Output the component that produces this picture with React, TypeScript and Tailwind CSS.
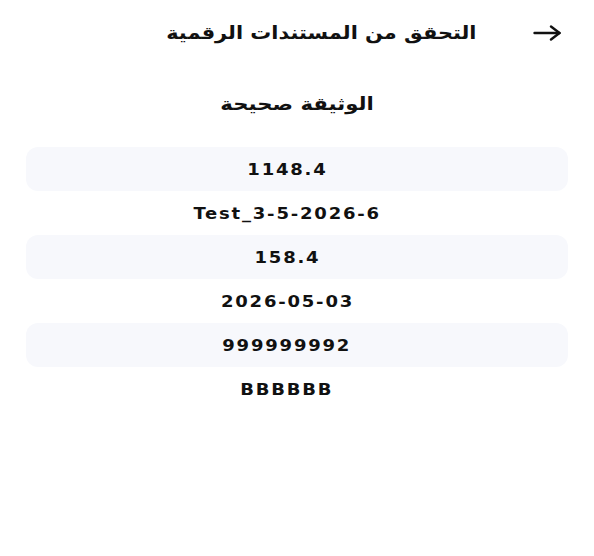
const rows = ["1148.4", "Test_3-5-2026-6", "158.4", "2026-05-03", "999999992", "BBBBBB"];

function BackArrow() {
  return (
    <svg width="28" height="16" viewBox="0 0 28 16" fill="none" stroke="#111" strokeWidth="2.4" strokeLinecap="round" strokeLinejoin="round">
      <path d="M1.5 8h25" />
      <path d="M18 1.5l8.5 6.5-8.5 6.5" />
    </svg>
  );
}

export default function App() {
  return (
    <div
      dir="rtl"
      className="min-h-[556px] w-[594px] bg-white text-[#111] [font-family:'DejaVu_Sans',sans-serif]"
    >
      <div className="flex h-[64px] items-center pr-[33px] pl-[32px] pt-[2px]">
        <span className="ml-[57px] flex">
          <BackArrow />
        </span>
        <h1 className="-mt-[2px] origin-right scale-x-[1.16] text-[18px] font-bold">التحقق من المستندات الرقمية</h1>
      </div>
      <div className="mt-[26px] flex justify-center">
        <span className="scale-x-[1.18] text-[18px] font-bold">الوثيقة صحيحة</span>
      </div>
      <div className="mt-[30px] flex flex-col px-[26px]">
        {rows.map((r, i) => (
          <div
            key={r}
            dir="ltr"
            className={
              "flex h-[44px] items-center justify-center rounded-[12px] pt-[3px] pr-[20px] " +
              (i % 2 === 0 ? "bg-[#f7f8fc]" : "")
            }
          >
            <span className="scale-x-[1.2] text-[15px] font-bold tracking-[1.5px]">{r}</span>
          </div>
        ))}
      </div>
    </div>
  );
}
